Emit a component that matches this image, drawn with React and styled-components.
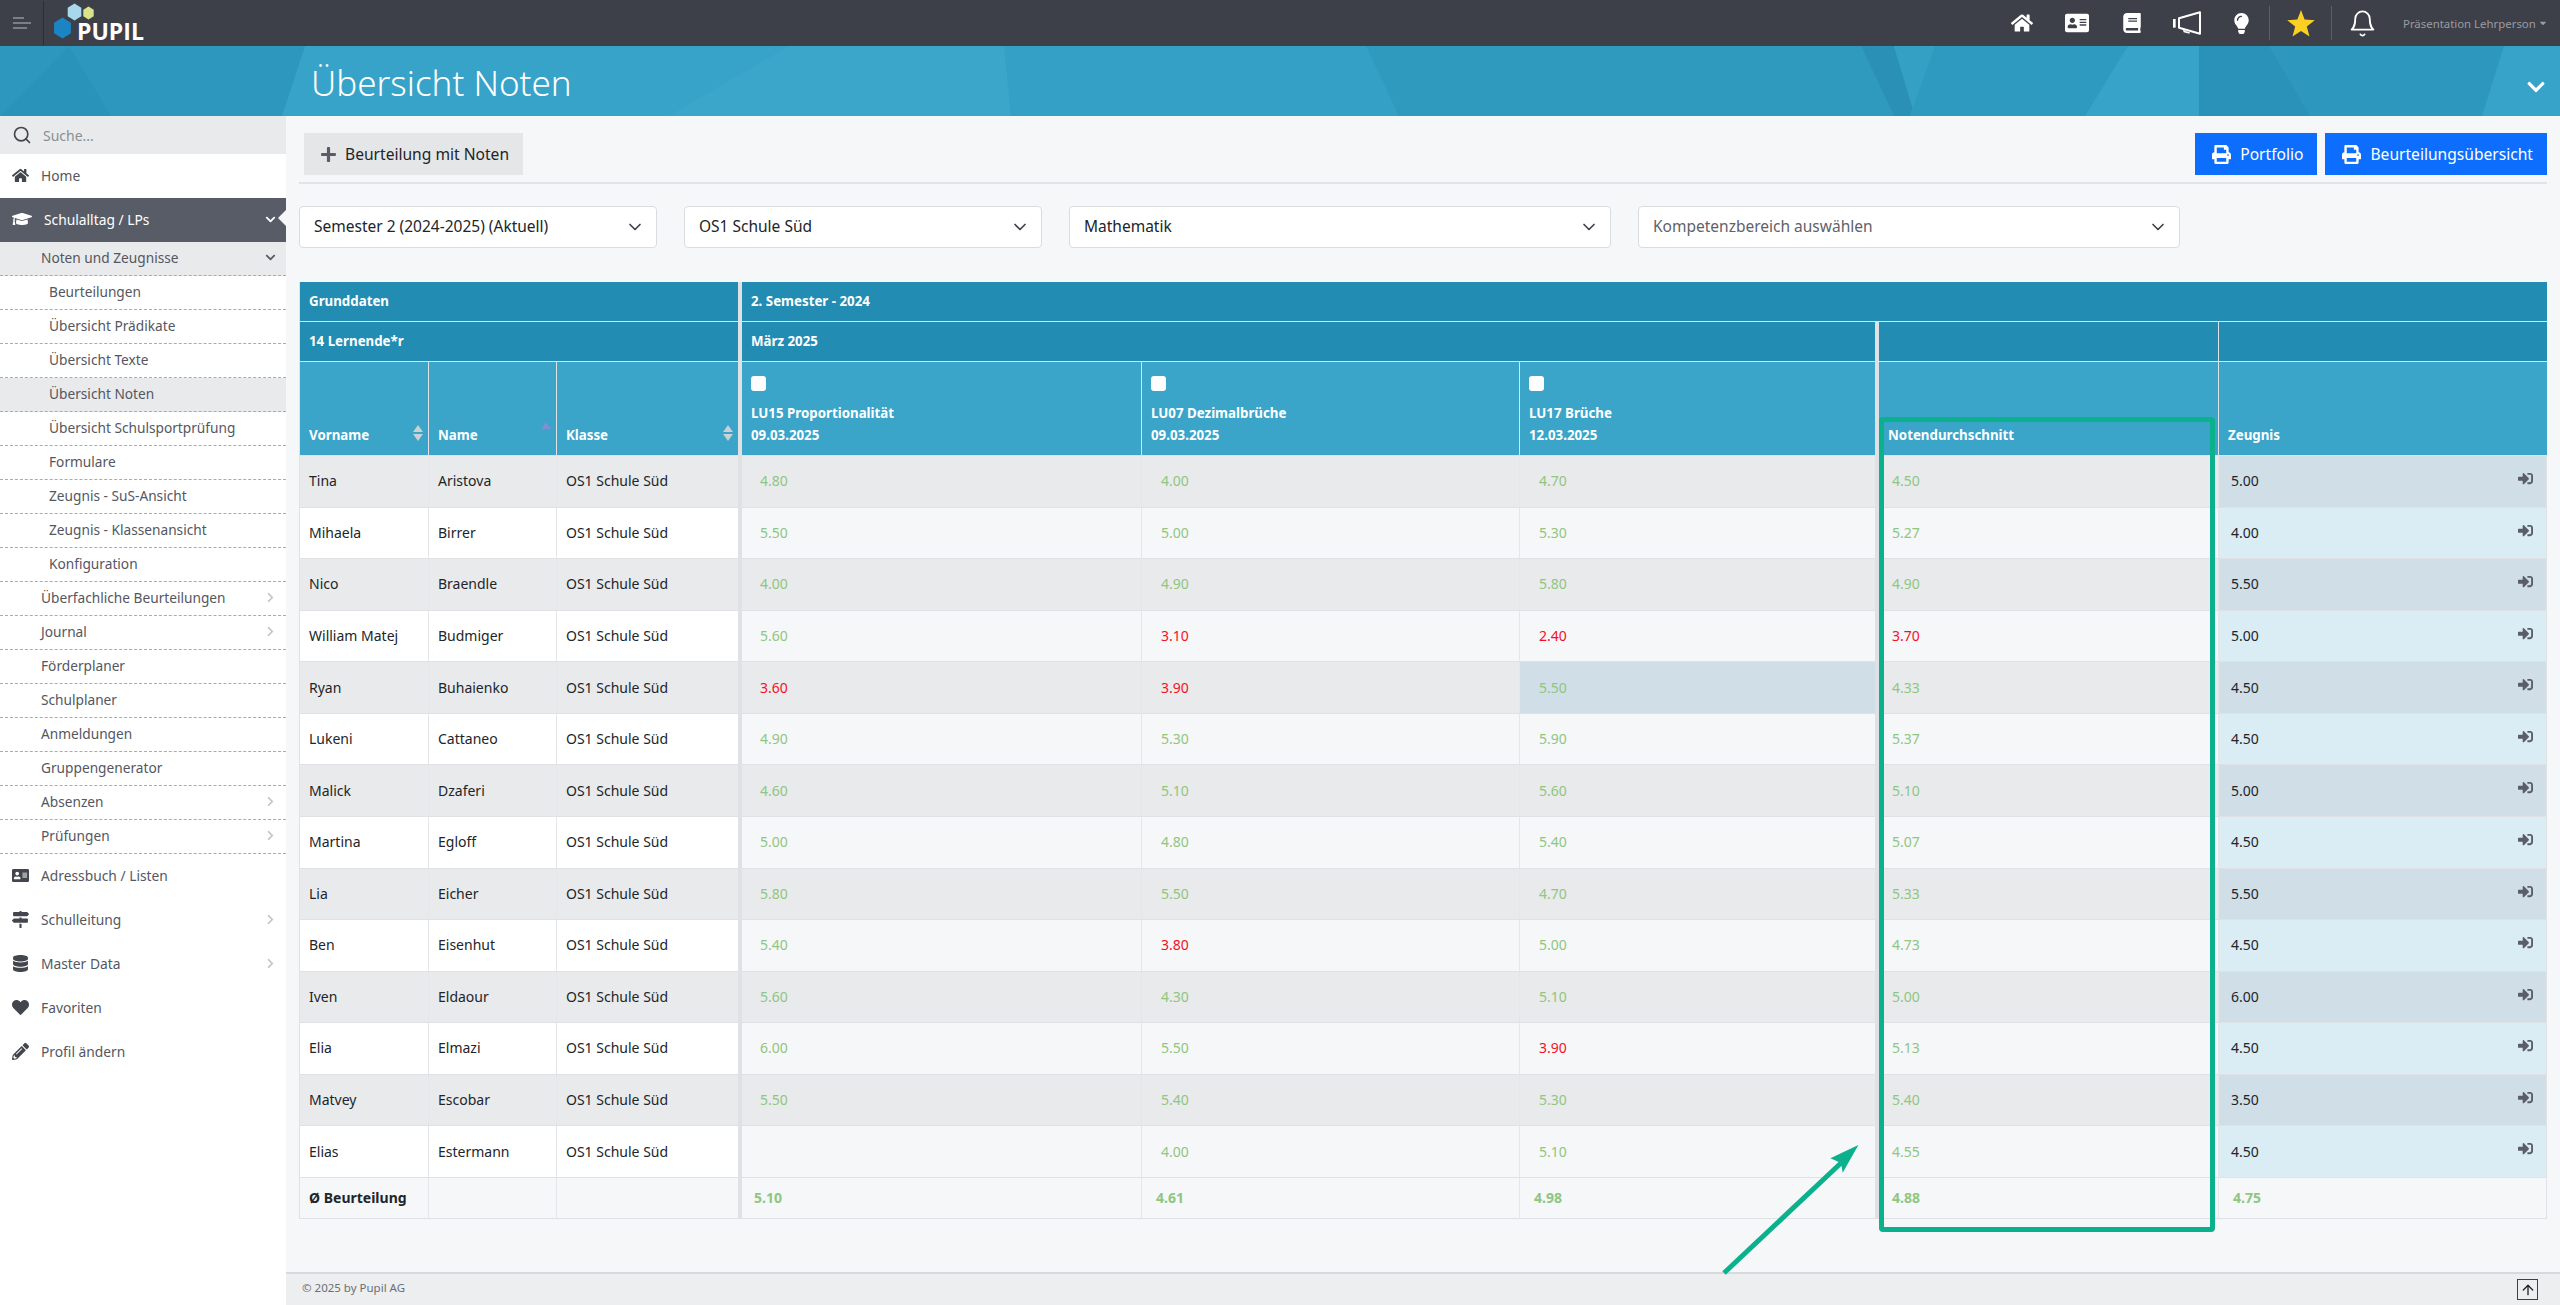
import React from 'react'
import styled, { createGlobalStyle } from 'styled-components'
import {
  FaHome, FaGraduationCap, FaAddressCard, FaMapSigns, FaDatabase, FaHeart, FaPencilAlt,
  FaPrint, FaPlus, FaChevronDown, FaChevronRight, FaSignInAlt, FaBook, FaCaretDown, FaLightbulb,
} from 'react-icons/fa'
import { LuSearch, LuChevronDown, LuArrowUp, LuBell } from 'react-icons/lu'

const GlobalStyle = createGlobalStyle`
  html, body {
    margin: 0;
    padding: 0;
    background: #f6f7f9;
    font-family: "Noto Sans", "Open Sans", sans-serif;
    color: #212529;
  }
  * { box-sizing: border-box; }
`

const Page = styled.div`
  position: relative;
  width: 2560px;
  height: 1305px;
  display: flex;
  flex-direction: column;
  overflow: hidden;
`

const TopBar = styled.header`
  height: 46px;
  background: #3d4049;
  display: flex;
  align-items: center;
`

const MenuToggle = styled.div`
  width: 44px;
  height: 44px;
  border-right: 1px solid #2b2d33;
  display: flex;
  flex-direction: column;
  justify-content: center;
  gap: 3px;
  padding-left: 13px;
  span {
    display: block;
    height: 2px;
    background: #7c7e85;
  }
  span:nth-child(1) { width: 11px; }
  span:nth-child(2) { width: 18px; }
  span:nth-child(3) { width: 14px; }
`

const Logo = styled.div`
  position: relative;
  width: 100px;
  height: 46px;
  margin-left: 10px;
  svg { position: absolute; left: 0; top: 0; }
`

const LogoText = styled.span`
  position: absolute;
  left: 23px;
  top: 16px;
  font-family: "Open Sans", sans-serif;
  font-weight: 700;
  font-size: 23px;
  line-height: 30px;
  color: #fff;
`

const TopIcons = styled.div`
  margin-left: auto;
  display: flex;
  align-items: center;
  height: 46px;
`

const TopIcon = styled.div`
  width: ${p => p.$w || 55}px;
  height: 46px;
  display: flex;
  align-items: center;
  justify-content: center;
  color: ${p => p.$color || '#fff'};
  font-size: ${p => p.$size || 22}px;
`

const TopDivider = styled.div`
  width: 1px;
  height: 34px;
  background: #5b5e66;
`

const UserName = styled.div`
  width: 167px;
  padding-left: 10px;
  font-size: 11.4px;
  color: #999ca3;
  display: flex;
  align-items: center;
  white-space: nowrap;
  svg { font-size: 10px; margin-left: 2px; }
`

const Banner = styled.div`
  position: relative;
  height: 70px;
  background: #38a3c8;
  display: flex;
  align-items: center;
  overflow: hidden;
`

const BannerArt = styled.svg`
  position: absolute;
  left: 0;
  top: 0;
`

const PageTitle = styled.h1`
  position: relative;
  margin: 4px 0 0 311px;
  font-weight: 300;
  font-size: 35px;
  line-height: 66px;
  color: #fff;
`

const BannerToggle = styled.div`
  position: absolute;
  right: 14px;
  bottom: 19px;
  color: #fff;
  font-size: 20px;
  line-height: 0;
`

const Body = styled.div`
  flex: 1;
  display: flex;
  min-height: 0;
`

const Sidebar = styled.nav`
  width: 286px;
  background: #fff;
  flex-shrink: 0;
`

const SearchRow = styled.div`
  height: 38px;
  background: #e9eaec;
  display: flex;
  align-items: center;
  padding-left: 12px;
  gap: 11px;
  font-size: 14px;
  color: #8b8e94;
  svg { font-size: 20px; color: #43464d; }
`

const MainItem = styled.div`
  position: relative;
  height: 44px;
  display: flex;
  align-items: center;
  padding: 0 10px 2px 12px;
  font-size: 13.8px;
  color: ${p => (p.$active ? '#fff' : '#54575f')};
  background: ${p => (p.$active ? '#585c66' : 'transparent')};
  ${p => p.$active && `
    &::after {
      content: '';
      position: absolute;
      right: 0;
      top: 12px;
      border: 8px solid transparent;
      border-right-color: #f6f7f9;
      border-left-width: 0;
    }
  `}
`

const ItemIcon = styled.span`
  width: ${p => (p.$active ? 32 : 29)}px;
  flex-shrink: 0;
  display: flex;
  align-items: center;
  font-size: 17px;
  color: ${p => (p.$active ? '#fff' : '#43464d')};
`

const Chevron = styled.span`
  margin-left: auto;
  padding-right: ${p => p.$pad || 0}px;
  display: flex;
  font-size: 11px;
  color: ${p => p.$color || '#c4c6ca'};
`

const SubItem = styled.div`
  height: 34px;
  display: flex;
  align-items: center;
  padding: 0 10px 2px ${p => (p.$deep ? 49 : 41)}px;
  font-size: 13.7px;
  color: #54575f;
  border-bottom: 1px dashed #a9abaf;
  background: ${p => (p.$selected ? '#e9eaec' : 'transparent')};
`

const Main = styled.main`
  position: relative;
  flex: 1;
  min-width: 0;
  padding: 17px 13px 0 13px;
  display: flex;
  flex-direction: column;
`

const ActionBar = styled.div`
  display: flex;
  justify-content: space-between;
  padding: 0 0 7px 5px;
  border-bottom: 2px solid #e2e3e6;
`

const ActionGroup = styled.div`
  display: flex;
  gap: 8px;
`

const ActionButton = styled.button`
  height: 42px;
  border: 0;
  border-radius: 0;
  padding: 0 14px 0 ${p => (p.$primary ? 17 : 16)}px;
  display: flex;
  align-items: center;
  gap: ${p => (p.$primary ? 9 : 8)}px;
  font-family: inherit;
  font-size: 15.6px;
  color: ${p => (p.$primary ? '#fff' : '#212529')};
  background: ${p => (p.$primary ? '#0d6efd' : '#e5e6e8')};
  svg { font-size: ${p => (p.$primary ? 19 : 17)}px; color: ${p => (p.$primary ? '#fff' : '#585c66')}; }
`

const Filters = styled.div`
  display: flex;
  gap: 27px;
  margin-top: 22px;
`

const FilterSelect = styled.div`
  width: ${p => p.$w}px;
  height: 42px;
  background: #fff;
  border: 1px solid #d9dce0;
  border-radius: 4px;
  display: flex;
  align-items: center;
  justify-content: space-between;
  padding: 0 11px 2px 14px;
  font-size: 15.5px;
  color: ${p => (p.$placeholder ? '#5f6268' : '#212529')};
  svg { font-size: 20px; color: #3d4049; margin-top: 2px; }
`

const Grades = styled.table`
  margin-top: 34px;
  width: 2248px;
  table-layout: fixed;
  border-collapse: separate;
  border-spacing: 0;
  font-size: 14px;
  border-left: 1px solid #dfe1e5;
`

const Head = styled.th`
  height: ${p => p.$h}px;
  padding: 0 9px;
  text-align: left;
  vertical-align: ${p => (p.$tall ? 'bottom' : 'middle')};
  padding-bottom: ${p => (p.$tall ? 9 : 2)}px;
  font-size: 13.3px;
  font-weight: 700;
  line-height: 22px;
  color: #fff;
  background: ${p => (p.$tall ? '#3aa4c9' : '#238cb3')};
  border-bottom: 1px solid #dfe1e5;
  border-left: ${p => (p.$thick ? '4px solid #dfe1e5' : p.$line ? '1px solid #dfe1e5' : '0')};
  position: relative;
`

const SortMark = styled.span`
  position: absolute;
  right: 5px;
  bottom: ${p => (p.$up ? 26 : 14)}px;
  display: flex;
  flex-direction: column;
  gap: 2px;
  i {
    display: block;
    border: 5px solid transparent;
    border-top-width: 0;
    border-bottom: 7px solid ${p => (p.$up ? '#7f8fd6' : '#c9d0d6')};
  }
  i + i {
    border-bottom-width: 0;
    border-top: 7px solid #c9d0d6;
  }
`

const CheckBox = styled.span`
  display: block;
  width: 15px;
  height: 15px;
  margin-bottom: 11px;
  border-radius: 3px;
  background: #fff;
`

const Cell = styled.td`
  height: ${p => p.$h || 51.57}px;
  padding: 0 ${p => p.$pad || 9}px 1px;
  font-size: 14px;
  font-weight: ${p => (p.$bold ? 700 : 400)};
  color: ${p => p.$color || '#212529'};
  background: ${p => p.$bg};
  border-bottom: 1px solid #dfe1e5;
  border-left: ${p => (p.$thick ? '4px solid #dfe1e5' : p.$line ? '1px solid #e4e6e9' : '0')};
  border-right: ${p => (p.$end ? '1px solid #dfe1e5' : '0')};
  position: relative;
`

const GoIcon = styled.span`
  position: absolute;
  right: 13px;
  top: 15px;
  font-size: 15px;
  color: #5a5e68;
  display: flex;
`

const Footer = styled.footer`
  position: absolute;
  left: 0;
  right: 0;
  bottom: 0;
  height: 33px;
  background: #eceef0;
  border-top: 2px solid #d8d9dc;
  padding: 0 22px 0 16px;
  display: flex;
  align-items: center;
  justify-content: space-between;
  font-size: 11.5px;
  color: #6c6f76;
`

const FooterText = styled.span`
  margin-bottom: 5px;
`

const UpButton = styled.span`
  width: 21px;
  height: 21px;
  border: 1px solid #3d4049;
  display: flex;
  align-items: center;
  justify-content: center;
  color: #212529;
  font-size: 16px;
`

const Highlight = styled.div`
  position: absolute;
  left: 1879px;
  top: 417px;
  width: 336px;
  height: 815px;
  border: 5px solid #0bb08c;
  border-radius: 4px;
  pointer-events: none;
`

const ArrowMark = styled.svg`
  position: absolute;
  left: 1700px;
  top: 1130px;
  pointer-events: none;
`

const subItems = ['Beurteilungen', 'Übersicht Prädikate', 'Übersicht Texte', 'Übersicht Noten', 'Übersicht Schulsportprüfung', 'Formulare', 'Zeugnis - SuS-Ansicht', 'Zeugnis - Klassenansicht', 'Konfiguration']
const moreItems = [
  ['Überfachliche Beurteilungen', true], ['Journal', true], ['Förderplaner'], ['Schulplaner'],
  ['Anmeldungen'], ['Gruppengenerator'], ['Absenzen', true], ['Prüfungen', true],
]

// vorname, name, LU15, LU07, LU17, schnitt, zeugnis
const students = [
  ['Tina', 'Aristova', '4.80', '4.00', '4.70', '4.50', '5.00'],
  ['Mihaela', 'Birrer', '5.50', '5.00', '5.30', '5.27', '4.00'],
  ['Nico', 'Braendle', '4.00', '4.90', '5.80', '4.90', '5.50'],
  ['William Matej', 'Budmiger', '5.60', '3.10', '2.40', '3.70', '5.00'],
  ['Ryan', 'Buhaienko', '3.60', '3.90', '5.50', '4.33', '4.50'],
  ['Lukeni', 'Cattaneo', '4.90', '5.30', '5.90', '5.37', '4.50'],
  ['Malick', 'Dzaferi', '4.60', '5.10', '5.60', '5.10', '5.00'],
  ['Martina', 'Egloff', '5.00', '4.80', '5.40', '5.07', '4.50'],
  ['Lia', 'Eicher', '5.80', '5.50', '4.70', '5.33', '5.50'],
  ['Ben', 'Eisenhut', '5.40', '3.80', '5.00', '4.73', '4.50'],
  ['Iven', 'Eldaour', '5.60', '4.30', '5.10', '5.00', '6.00'],
  ['Elia', 'Elmazi', '6.00', '5.50', '3.90', '5.13', '4.50'],
  ['Matvey', 'Escobar', '5.50', '5.40', '5.30', '5.40', '3.50'],
  ['Elias', 'Estermann', '', '4.00', '5.10', '4.55', '4.50'],
]

const gradeColor = v => (parseFloat(v) < 4 ? '#f5101f' : '#8fc680')

const Hexagon = ({ cx, cy, r, fill }) => {
  const w = r * 0.8
  return <path d={`M${cx} ${cy - r}L${cx + w} ${cy - r / 2}V${cy + r / 2}L${cx} ${cy + r}L${cx - w} ${cy + r / 2}V${cy - r / 2}Z`} fill={fill} />
}

const Megaphone = () => (
  <svg width="28" height="24" viewBox="0 0 84 72">
    <rect x="0" y="24" width="8" height="26" fill="#fff" />
    <path d="M18 22L81 4V68L18 50Z" fill="none" stroke="#fff" strokeWidth="6" strokeLinejoin="round" />
    <path d="M32 54L34 62L50 66" fill="none" stroke="#fff" strokeWidth="5" />
  </svg>
)

const Star = () => (
  <svg width="28" height="27" viewBox="0 0 28 27">
    <polygon points="14,0 17.6,9.6 27.8,10.2 19.8,16.6 22.5,26.6 14,21 5.5,26.6 8.2,16.6 0.2,10.2 10.4,9.6" fill="#fbcf24" />
  </svg>
)

export default function App() {
  return (
    <Page>
      <GlobalStyle />
      <TopBar>
        <MenuToggle><span /><span /><span /></MenuToggle>
        <Logo>
          <svg width="50" height="46">
            <Hexagon cx={8.5} cy={28} r={10.5} fill="#1b85c4" />
            <Hexagon cx={20.5} cy={12} r={8.5} fill="#a8d8ec" />
            <Hexagon cx={34.5} cy={13} r={6.5} fill="#dbe38a" />
          </svg>
          <LogoText>PUPIL</LogoText>
        </Logo>
        <TopIcons>
          <TopIcon><FaHome /></TopIcon>
          <TopIcon><FaAddressCard size={24} /></TopIcon>
          <TopIcon><FaBook size={20} /></TopIcon>
          <TopIcon><Megaphone /></TopIcon>
          <TopIcon><FaLightbulb size={21} /></TopIcon>
          <TopDivider />
          <TopIcon $w={61}><Star /></TopIcon>
          <TopDivider />
          <TopIcon $w={61}><LuBell size={29} strokeWidth={1.5} /></TopIcon>
          <UserName>Präsentation Lehrperson<FaCaretDown /></UserName>
        </TopIcons>
      </TopBar>

      <Banner>
        <BannerArt width="2560" height="70">
          <polygon points="0,0 305,0 282,70 0,70" fill="#2d97bd" />
          <polygon points="69,0 111,70 0,70" fill="#2a93b9" />
          <polygon points="789,0 1004,0 1011,70 669,70" fill="#3ba6ca" />
          <polygon points="1004,0 1366,0 1399,70 1011,70" fill="#35a0c5" />
          <polygon points="1366,0 1861,0 1894,70 1399,70" fill="#2f99be" />
          <polygon points="1861,0 1894,0 1915,70 1894,70" fill="#2a90b6" />
          <polygon points="1894,0 1935,0 1910,70 1915,70" fill="#33a0c4" />
          <polygon points="1935,0 2128,0 2085,70 1910,70" fill="#2f9abf" />
          <polygon points="2199,0 2504,0 2482,70 2199,70" fill="#2d97bd" />
          <polygon points="2199,0 2269,0 2310,70 2199,70" fill="#2a92b8" />
        </BannerArt>
        <PageTitle>Übersicht Noten</PageTitle>
        <BannerToggle><FaChevronDown /></BannerToggle>
      </Banner>

      <Body>
        <Sidebar>
          <SearchRow><LuSearch />Suche...</SearchRow>
          <MainItem><ItemIcon><FaHome /></ItemIcon>Home</MainItem>
          <MainItem $active>
            <ItemIcon $active><FaGraduationCap size={20} /></ItemIcon>Schulalltag / LPs
            <Chevron $color="#fff"><FaChevronDown /></Chevron>
          </MainItem>
          <SubItem $selected>Noten und Zeugnisse<Chevron $color="#585c66"><FaChevronDown /></Chevron></SubItem>
          {subItems.map(label => (
            <SubItem key={label} $deep $selected={label === 'Übersicht Noten'}>{label}</SubItem>
          ))}
          {moreItems.map(([label, hasKids]) => (
            <SubItem key={label}>
              {label}
              {hasKids && <Chevron><FaChevronRight /></Chevron>}
            </SubItem>
          ))}
          <MainItem><ItemIcon><FaAddressCard /></ItemIcon>Adressbuch / Listen</MainItem>
          <MainItem><ItemIcon><FaMapSigns /></ItemIcon>Schulleitung<Chevron><FaChevronRight /></Chevron></MainItem>
          <MainItem><ItemIcon><FaDatabase /></ItemIcon>Master Data<Chevron><FaChevronRight /></Chevron></MainItem>
          <MainItem><ItemIcon><FaHeart /></ItemIcon>Favoriten</MainItem>
          <MainItem><ItemIcon><FaPencilAlt /></ItemIcon>Profil ändern</MainItem>
        </Sidebar>

        <Main>
          <ActionBar>
            <ActionButton><FaPlus />Beurteilung mit Noten</ActionButton>
            <ActionGroup>
              <ActionButton $primary><FaPrint />Portfolio</ActionButton>
              <ActionButton $primary><FaPrint />Beurteilungsübersicht</ActionButton>
            </ActionGroup>
          </ActionBar>

          <Filters>
            <FilterSelect $w={358}>Semester 2 (2024-2025) (Aktuell)<LuChevronDown /></FilterSelect>
            <FilterSelect $w={358}>OS1 Schule Süd<LuChevronDown /></FilterSelect>
            <FilterSelect $w={542}>Mathematik<LuChevronDown /></FilterSelect>
            <FilterSelect $w={542} $placeholder>Kompetenzbereich auswählen<LuChevronDown /></FilterSelect>
          </Filters>

          <Grades>
            <colgroup>
              <col style={{ width: 128 }} /><col style={{ width: 128 }} /><col style={{ width: 182 }} />
              <col style={{ width: 403 }} /><col style={{ width: 378 }} /><col style={{ width: 356 }} />
              <col style={{ width: 343 }} /><col style={{ width: 329 }} />
            </colgroup>
            <thead>
              <tr>
                <Head $h={40} colSpan={3}>Grunddaten</Head>
                <Head $h={40} colSpan={5} $thick>2. Semester - 2024</Head>
              </tr>
              <tr>
                <Head $h={40} colSpan={3}>14 Lernende*r</Head>
                <Head $h={40} colSpan={3} $thick>März 2025</Head>
                <Head $h={40} $thick />
                <Head $h={40} $line />
              </tr>
              <tr>
                <Head $h={94} $tall>Vorname<SortMark><i /><i /></SortMark></Head>
                <Head $h={94} $tall $line>Name<SortMark $up><i /></SortMark></Head>
                <Head $h={94} $tall $line>Klasse<SortMark><i /><i /></SortMark></Head>
                <Head $h={94} $tall $thick><CheckBox />LU15 Proportionalität<br />09.03.2025</Head>
                <Head $h={94} $tall $line><CheckBox />LU07 Dezimalbrüche<br />09.03.2025</Head>
                <Head $h={94} $tall $line><CheckBox />LU17 Brüche<br />12.03.2025</Head>
                <Head $h={94} $tall $thick>Notendurchschnitt</Head>
                <Head $h={94} $tall $line>Zeugnis</Head>
              </tr>
            </thead>
            <tbody>
              {students.map((s, i) => {
                const odd = i % 2 === 0
                const baseBg = odd ? '#e9eaec' : '#fff'
                const gradeBg = odd ? '#e9eaec' : '#f6f7f9'
                return (
                  <tr key={s[1]}>
                    <Cell $bg={baseBg}>{s[0]}</Cell>
                    <Cell $bg={baseBg} $line>{s[1]}</Cell>
                    <Cell $bg={baseBg} $line>OS1 Schule Süd</Cell>
                    <Cell $bg={gradeBg} $thick $pad={18} $color={gradeColor(s[2])}>{s[2]}</Cell>
                    <Cell $bg={gradeBg} $line $pad={19} $color={gradeColor(s[3])}>{s[3]}</Cell>
                    <Cell $bg={s[1] === 'Buhaienko' ? '#d0dee7' : gradeBg} $line $pad={19} $color={gradeColor(s[4])}>{s[4]}</Cell>
                    <Cell $bg={gradeBg} $thick $pad={13} $color={gradeColor(s[5])}>{s[5]}</Cell>
                    <Cell $bg={odd ? '#d0dee7' : '#daecf4'} $line $pad={12} $end>
                      {s[6]}
                      <GoIcon><FaSignInAlt /></GoIcon>
                    </Cell>
                  </tr>
                )
              })}
              <tr>
                <Cell $h={41} $bg="#f6f7f9" $bold>Ø Beurteilung</Cell>
                <Cell $h={41} $bg="#f6f7f9" $line />
                <Cell $h={41} $bg="#f6f7f9" $line />
                <Cell $h={41} $bg="#f6f7f9" $thick $pad={12} $bold $color="#8fc680">5.10</Cell>
                <Cell $h={41} $bg="#f6f7f9" $line $pad={14} $bold $color="#8fc680">4.61</Cell>
                <Cell $h={41} $bg="#f6f7f9" $line $pad={14} $bold $color="#8fc680">4.98</Cell>
                <Cell $h={41} $bg="#f6f7f9" $thick $pad={13} $bold $color="#8fc680">4.88</Cell>
                <Cell $h={41} $bg="#f6f7f9" $line $pad={14} $bold $end $color="#8fc680">4.75</Cell>
              </tr>
            </tbody>
          </Grades>

          <Footer>
            <FooterText>© 2025 by Pupil AG</FooterText>
            <UpButton><LuArrowUp /></UpButton>
          </Footer>
        </Main>
      </Body>

      <Highlight />
      <ArrowMark width="170" height="150">
        <line x1="24" y1="143" x2="141" y2="33" stroke="#0bb08c" strokeWidth="5" />
        <polygon points="158.4,15 130.4,28.3 141,33 142.7,42.7" fill="#0bb08c" />
      </ArrowMark>
    </Page>
  )
}
